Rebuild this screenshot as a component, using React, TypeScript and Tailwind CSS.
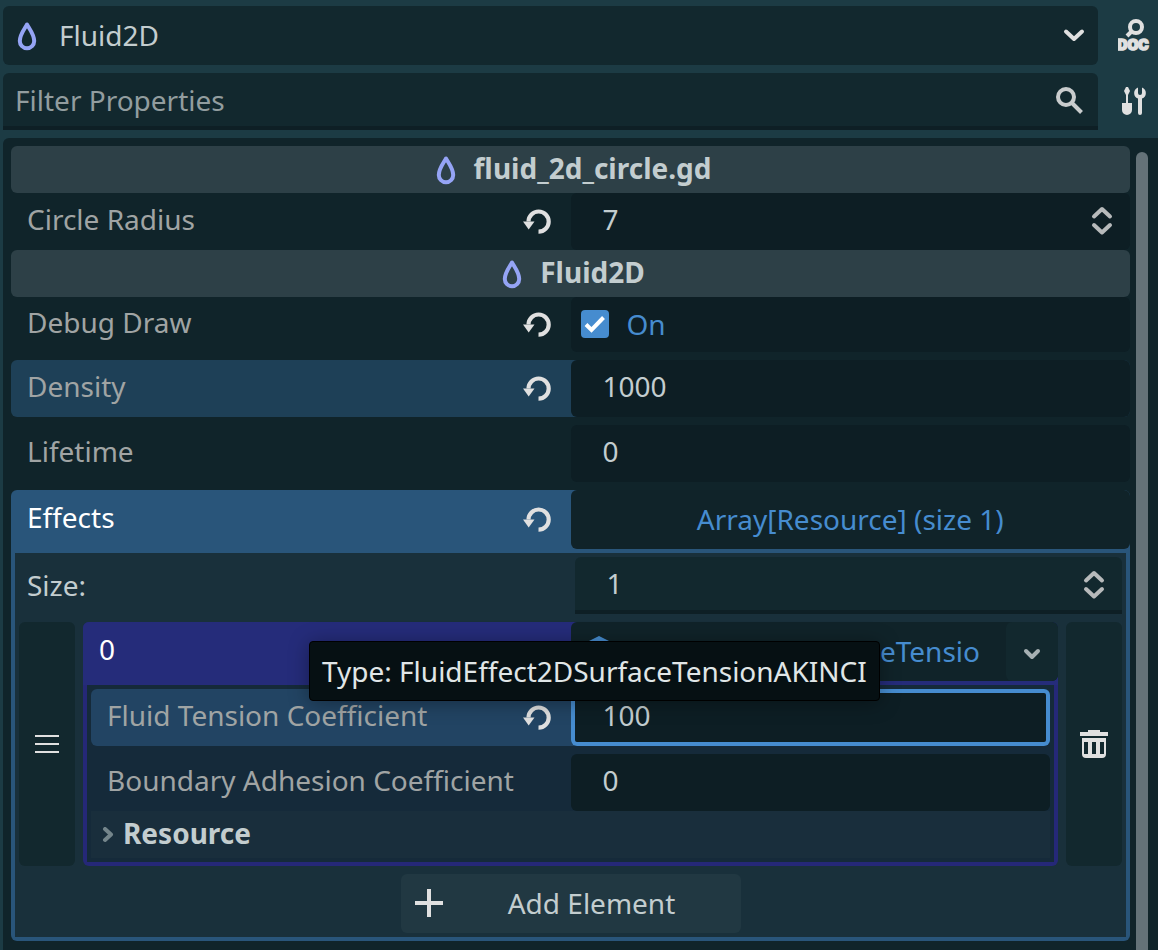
import type { ReactNode } from "react";

const focusRing = "outline-none focus-visible:ring-2 focus-visible:ring-[#468ccf]";

function DropIcon() {
  return (
    <svg viewBox="0 0 32 32" className="h-8 w-8 shrink-0" fill="none" aria-hidden="true">
      <path
        d="M16 4.500C13.300 9.200 8.800 14.700 8.800 21a7.200 7.200 0 0 0 14.400 0C23.200 14.700 18.700 9.200 16 4.500Z"
        stroke="#95a4f5"
        strokeWidth="4"
        strokeLinejoin="round"
      />
    </svg>
  );
}

function ResetIcon() {
  return (
    <svg viewBox="0 0 28 28" className="h-7 w-7" fill="none" aria-hidden="true">
      <path d="M15.500 23.700A10.100 10.100 0 1 0 5.500 13.600" stroke="#e0e0e0" strokeWidth="4.200" />
      <path d="M0 13.500h11.500L5.700 21.500Z" fill="#e0e0e0" />
    </svg>
  );
}

function SpinnerIcon() {
  return (
    <svg
      viewBox="0 0 32 32"
      className="h-8 w-8"
      fill="none"
      stroke="#b7babb"
      strokeWidth="4"
      strokeLinecap="round"
      strokeLinejoin="round"
      aria-hidden="true"
    >
      <path d="M8 10.500 16 3l8 7.500M8 19l8 7.500 8-7.500" />
    </svg>
  );
}

function DocSearchIcon() {
  return (
    <svg viewBox="0 0 32 34" className="h-[34px] w-8" aria-hidden="true">
      <circle cx="18" cy="8" r="6" fill="none" stroke="#e0e0e0" strokeWidth="4" />
      <path d="m14 12-5 5" stroke="#e0e0e0" strokeWidth="4" />
      <text
        x="15"
        y="31"
        textAnchor="middle"
        fill="#e0e0e0"
        stroke="#e0e0e0"
        strokeWidth="1.500"
        className="font-[Inter] text-[14px] font-black"
      >
        DOC
      </text>
    </svg>
  );
}

function ToolsIcon() {
  return (
    <svg viewBox="0 0 32 32" className="h-8 w-8" fill="#e0e0e0" aria-hidden="true">
      <path d="M8 1h2L12 5 10 9v8h4v7a5 5 0 0 1-10 0v-7h4V9L6 5Z" />
      <path d="M20 1.400V7a2 2 0 0 0 4 0V1.400a6 6 0 0 1 0 11.200V27a2 2 0 0 1-4 0V12.600a6 6 0 0 1 0-11.200Z" />
    </svg>
  );
}

function ClassHeader({ children }: { children: ReactNode }) {
  return (
    <h2 className="flex h-[47px] items-center justify-center gap-3 rounded-md bg-[#2d4047] font-bold">
      <DropIcon />
      <span className="pb-1">{children}</span>
    </h2>
  );
}

function ResetButton({ label }: { label: string }) {
  return (
    <button type="button" aria-label={`Reset ${label}`} className={`mr-5 ${focusRing}`}>
      <ResetIcon />
    </button>
  );
}

type PropertyProps = {
  id: string;
  label: string;
  className?: string;
  reset?: boolean;
  children: ReactNode;
};

function Property({ id, label, className = "", reset = false, children }: PropertyProps) {
  return (
    <div className={`grid grid-cols-2 rounded-md ${className}`}>
      <div className="flex items-center justify-between">
        <label htmlFor={id} className="whitespace-nowrap pb-1.5 pl-4 text-[#a0a4a4]">
          {label}
        </label>
        {reset && <ResetButton label={label} />}
      </div>
      {children}
    </div>
  );
}

type ValueProps = { id: string; value: string; active?: boolean; spinner?: boolean };

function NumberValue({ id, value, active = false, spinner = false }: ValueProps) {
  return (
    <div
      className={`flex h-[57px] items-center rounded-md bg-[#0d1e24] ${
        active ? "ring-4 ring-inset ring-[#468ccf]" : ""
      }`}
    >
      <input
        id={id}
        type="text"
        inputMode="decimal"
        defaultValue={value}
        className="h-full w-full min-w-0 flex-1 bg-transparent pb-1.5 pl-8 outline-none"
      />
      {spinner && (
        <button type="button" aria-label="Adjust value" className={`mr-3 ${focusRing}`}>
          <SpinnerIcon />
        </button>
      )}
    </div>
  );
}

function Toolbar() {
  return (
    <div className="flex flex-col gap-2 pl-[3px]">
      <div className="flex">
        <div className="relative h-[59px] flex-1 rounded-md bg-[#12282e]">
          <select
            aria-label="Inspected object"
            className="h-full w-full appearance-none bg-transparent pb-0.5 pl-14 pr-12 outline-none"
          >
            <option>Fluid2D</option>
          </select>
          <span className="pointer-events-none absolute inset-y-0 left-2 flex items-center">
            <DropIcon />
          </span>
          <span className="pointer-events-none absolute inset-y-0 right-2 flex items-center">
            <svg viewBox="0 0 32 32" className="h-8 w-8" fill="none" aria-hidden="true">
              <path
                d="m8 11.500 8 7.500 8-7.500"
                stroke="#e0e0e0"
                strokeWidth="4"
                strokeLinecap="round"
                strokeLinejoin="round"
              />
            </svg>
          </span>
        </div>
        <button type="button" aria-label="Open documentation" className="w-[60px] pl-5">
          <DocSearchIcon />
        </button>
      </div>
      <div className="flex">
        <div className="flex h-[57px] flex-1 items-center rounded-t-md border-b-4 border-[#0e1f25] bg-[#12282e]">
          <input
            type="text"
            aria-label="Filter Properties"
            placeholder="Filter Properties"
            className="h-full w-full min-w-0 flex-1 bg-transparent pl-3 outline-none placeholder:text-[#929d9f]"
          />
          <svg viewBox="0 0 32 32" className="mr-3 h-8 w-8" fill="none" stroke="#c9cccd" strokeWidth="4" aria-hidden="true">
            <circle cx="12" cy="13" r="8" />
            <path d="m18 19 9.500 9.500" />
          </svg>
        </div>
        <button type="button" aria-label="Object tools" className="w-[60px] pl-5">
          <ToolsIcon />
        </button>
      </div>
    </div>
  );
}

function ResourceElement() {
  return (
    <div className="min-w-0 flex-1 rounded-md bg-[#252878]">
      <div className="grid h-[63px] grid-cols-2 rounded-t-md bg-[#252c7a] pb-1">
        <span className="pb-1 pl-4 leading-[55px] text-white">0</span>
        <div className="flex min-w-0 rounded-md bg-[#102329]">
          <button
            type="button"
            className="flex min-w-0 flex-1 items-center gap-2 pb-0.5 pl-3 text-[#468ccf]"
          >
            <svg viewBox="0 0 32 32" className="h-8 w-8 shrink-0" fill="#468ccf" aria-hidden="true">
              <path d="M16 1 28 7v16l-12 7L4 23V7Z" />
            </svg>
            <span className="flex min-w-0 flex-1 justify-end whitespace-nowrap pr-[26px]">
              FluidEffect2DSurfaceTensio
            </span>
          </button>
          <button
            type="button"
            aria-label="Resource options"
            className="flex w-[52px] shrink-0 items-center justify-center rounded-md bg-[#12282e]"
          >
            <svg viewBox="0 0 20 20" className="h-5 w-5" fill="none" aria-hidden="true">
              <path
                d="m4 9 6 6 6-6"
                stroke="#a6b0b3"
                strokeWidth="4"
                strokeLinecap="round"
                strokeLinejoin="round"
              />
            </svg>
          </button>
        </div>
      </div>
      <div className="mx-1 bg-[#152a3a] p-1">
        <Property id="tension" label="Fluid Tension Coefficient" reset className="mb-2 bg-[#224463]">
          <NumberValue id="tension" value="100" active />
        </Property>
        <Property id="adhesion" label="Boundary Adhesion Coefficient">
          <NumberValue id="adhesion" value="0" />
        </Property>
        <button
          type="button"
          aria-expanded="false"
          className="flex h-[47px] w-full items-center gap-2 bg-[#192e3c] pl-2 font-bold"
        >
          <svg viewBox="0 0 16 16" className="h-4 w-4" fill="none" aria-hidden="true">
            <path
              d="m6 2 6 5.500L6 13"
              stroke="#74858b"
              strokeWidth="4"
              strokeLinecap="round"
              strokeLinejoin="round"
            />
          </svg>
          <span className="pb-1">Resource</span>
        </button>
      </div>
      <div className="h-1" />
    </div>
  );
}

function EffectsProperty() {
  return (
    <section className="rounded-md bg-[#29557a]">
      <div className="grid h-[63px] grid-cols-2 pb-1">
        <div className="flex items-center justify-between">
          <span className="pb-1.5 pl-4 text-white">Effects</span>
          <ResetButton label="Effects" />
        </div>
        <button type="button" className="rounded-md bg-[#102329] pb-0.5 text-[#468ccf]">
          Array[Resource] (size 1)
        </button>
      </div>
      <div className="mx-1 flex flex-col gap-2 bg-[#19303b] p-1">
        <div className="grid grid-cols-2 gap-2">
          <label htmlFor="array-size" className="flex items-center pb-0.5 pl-2">
            Size:
          </label>
          <div className="flex h-[57px] items-center rounded-t-md bg-[#12282e] shadow-[inset_0_-4px_0_#0e1f25]">
            <input
              id="array-size"
              type="text"
              inputMode="numeric"
              defaultValue="1"
              className="h-full w-full min-w-0 flex-1 bg-transparent pb-1.5 pl-8 outline-none"
            />
            <button type="button" aria-label="Adjust size" className="mr-3">
              <SpinnerIcon />
            </button>
          </div>
        </div>
        <div className="flex gap-2">
          <button
            type="button"
            aria-label="Reorder element"
            className="flex w-14 items-center justify-center rounded-md bg-[#12282e]"
          >
            <svg viewBox="0 0 24 18" className="h-[18px] w-6" fill="#e0e0e0" aria-hidden="true">
              <path d="M0 0h24v2H0zM0 8h24v2H0zM0 16h24v2H0z" />
            </svg>
          </button>
          <ResourceElement />
          <button
            type="button"
            aria-label="Remove element"
            className="flex w-14 items-center justify-center rounded-md bg-[#12282e]"
          >
            <svg viewBox="0 0 28 28" className="h-7 w-7" fill="#e0e0e0" aria-hidden="true">
              <path d="M8 0h12v2h8v4H0V2h8Z" />
              <path
                fillRule="evenodd"
                d="M2 8h24v16a4 4 0 0 1-4 4H6a4 4 0 0 1-4-4ZM4 12v12h4V12Zm8 0v12h4V12Zm8 0v12h4V12Z"
              />
            </svg>
          </button>
        </div>
        <button
          type="button"
          className="flex h-[59px] w-[340px] items-center self-center rounded-md bg-[#213842] pb-0.5 pl-3.5"
        >
          <svg viewBox="0 0 28 28" className="h-7 w-7" fill="#e0e0e0" aria-hidden="true">
            <path d="M12 0h4v12h12v4H16v12h-4V16H0v-4h12Z" />
          </svg>
          <span className="flex-1 text-center">Add Element</span>
        </button>
      </div>
      <div className="h-1" />
    </section>
  );
}

export default function App() {
  return (
    <main className="relative flex min-h-screen flex-col gap-2 overflow-hidden bg-[#1c3b44] pt-1.5 font-['Noto_Sans',sans-serif] text-[28px] leading-[38px] text-[#c3cdcf]">
      <Toolbar />
      <div className="ml-[3px] flex flex-1 gap-1.5 rounded-tl-md bg-[#10242a] pl-2 pr-2.5 pt-2">
        <div className="min-w-0 flex-1 pb-2">
          <ClassHeader>fluid_2d_circle.gd</ClassHeader>
          <Property id="radius" label="Circle Radius" reset>
            <NumberValue id="radius" value="7" spinner />
          </Property>
          <ClassHeader>Fluid2D</ClassHeader>
          <div className="flex flex-col gap-2">
            <Property id="debug-draw" label="Debug Draw" reset>
              <div className="flex h-[55px] items-center gap-[18px] rounded-md bg-[#0d1e24] pb-0.5 pl-2.5 text-[#468ccf]">
                <span className="relative flex">
                  <input
                    id="debug-draw"
                    type="checkbox"
                    defaultChecked
                    className="peer h-7 w-7 appearance-none rounded bg-[#12282e] checked:bg-[#468ccf]"
                  />
                  <svg
                    viewBox="0 0 28 28"
                    className="pointer-events-none absolute inset-0 hidden h-7 w-7 peer-checked:block"
                    fill="none"
                    aria-hidden="true"
                  >
                    <path d="m5 14.500 5.500 5.500L22.500 7.500" stroke="#fff" strokeWidth="4" />
                  </svg>
                </span>
                <span>On</span>
              </div>
            </Property>
            <Property id="density" label="Density" reset className="bg-[#1e4057]">
              <NumberValue id="density" value="1000" />
            </Property>
            <Property id="lifetime" label="Lifetime">
              <NumberValue id="lifetime" value="0" />
            </Property>
            <EffectsProperty />
          </div>
        </div>
        <div className="mt-1.5 w-3 rounded-t-full bg-[#647278]" />
      </div>
      <div
        role="tooltip"
        className="absolute left-[309px] top-[641px] whitespace-nowrap rounded-sm border border-black bg-[#061013] px-3 py-2.5 text-[#e0e6e7] shadow-[0_2px_20px_rgba(0,0,0,0.35)]"
      >
        Type: FluidEffect2DSurfaceTensionAKINCI
      </div>
    </main>
  );
}
